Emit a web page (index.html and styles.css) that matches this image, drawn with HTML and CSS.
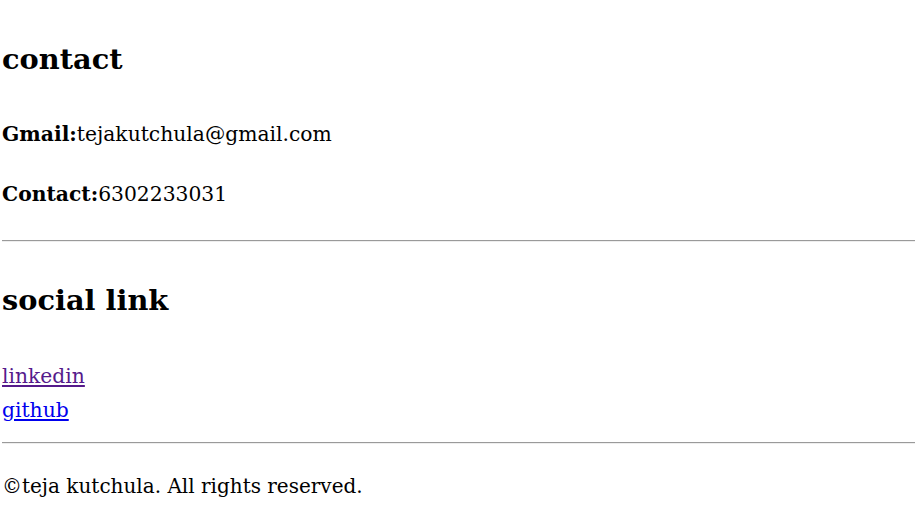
FILE: index.html
```html
<!DOCTYPE html>
<html>
<head>
<meta charset="utf-8">
<link rel="stylesheet" href="styles.css">
</head>
<body>
<section class="contact">
  <h2 class="title">contact</h2>
  <p class="line first"><b>Gmail:</b>tejakutchula@gmail.com</p>
  <p class="line"><b>Contact:</b>6302233031</p>
</section>
<hr class="rule rule-top">
<section class="social">
  <h2 class="title">social link</h2>
  <div class="links">
    <a class="link visited" href="#linkedin">linkedin</a>
    <a class="link" href="#github">github</a>
  </div>
</section>
<hr class="rule rule-bottom">
<footer class="footer">
  <p class="line footer-text">©teja kutchula. All rights reserved.</p>
</footer>
</body>
</html>
```
FILE: styles.css
```css
html, body {
  margin: 0;
  padding: 0;
  background: #fff;
}
body {
  padding-left: 2px;
  font-family: "DejaVu Serif", "Liberation Serif", serif;
  font-size: 20.3px;
  line-height: 34px;
  color: #000;
}
.contact {
  padding-top: 39px;
}
.title {
  margin: 0;
  font-size: 28.8px;
  line-height: 40px;
  font-weight: bold;
}
.line {
  margin: 0;
}
.first {
  margin-top: 38px;
  margin-bottom: 26px;
}
.rule {
  border: 0;
  border-top: 1px solid #9a9a9a;
  border-bottom: 1px solid #eeeeee;
  height: 0;
  margin: 0;
}
.rule-top {
  margin-top: 29px;
}
.social {
  padding-top: 38px;
}
.links {
  margin-top: 39px;
  display: flex;
  flex-direction: column;
  align-items: flex-start;
}
.link {
  color: #0000ee;
  text-decoration: underline;
}
.link.visited {
  color: #551a8b;
}
.rule-bottom {
  margin-top: 15px;
}
.footer {
  padding-top: 25px;
}
.footer-text {
  font-size: 20px;
}
```
